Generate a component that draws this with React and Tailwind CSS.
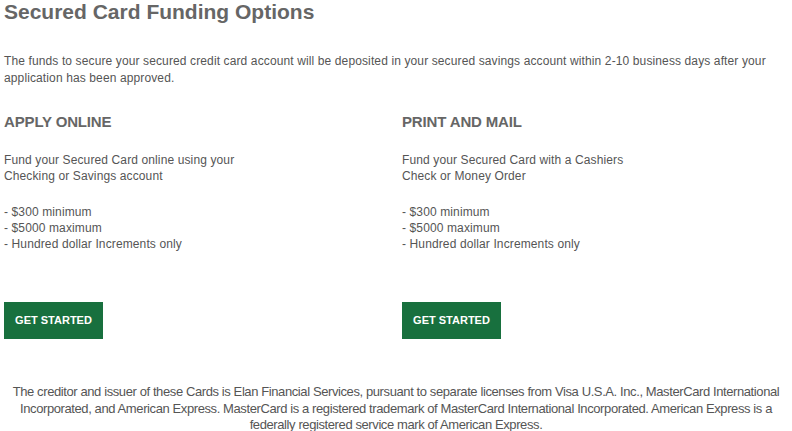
const options = [
  {
    title: "APPLY ONLINE",
    lines: ["Fund your Secured Card online using your", "Checking or Savings account"],
  },
  {
    title: "PRINT AND MAIL",
    lines: ["Fund your Secured Card with a Cashiers", "Check or Money Order"],
  },
];

const limits = ["- $300 minimum", "- $5000 maximum", "- Hundred dollar Increments only"];

function OptionColumn({ option }) {
  return (
    <div className="pl-[4px]">
      <h2 className="text-[15px] font-bold leading-[18px] text-[#666] tracking-[-0.15px]">{option.title}</h2>
      <p className="mt-[21px] text-[12px] leading-[16px] tracking-[0.12px] text-[#555]">
        {option.lines[0]}
        <br />
        {option.lines[1]}
      </p>
      <div className="mt-[20px] text-[12px] leading-[16px] tracking-[0.12px] text-[#555]">
        {limits.map((item) => (
          <div key={item}>{item}</div>
        ))}
      </div>
      <button className="mt-[50px] h-[37px] w-[99px] bg-[#18703e] text-[11px] font-bold text-white">
        GET STARTED
      </button>
    </div>
  );
}

export default function App() {
  return (
    <div className="bg-white w-[792px] h-[431px] overflow-hidden font-['Liberation_Sans',Arial,sans-serif]">
      <h1 className="pl-[4px] text-[21px] font-bold leading-[24px] text-[#666]">Secured Card Funding Options</h1>

      <p className="mt-[29px] px-[4px] text-[12px] leading-[17px] tracking-[0.12px] text-[#555]">
        The funds to secure your secured credit card account will be deposited in your secured savings account within
        2-10 business days after your application has been approved.
      </p>

      {/* Funding methods */}
      <div className="mt-[26px] grid grid-cols-[398px_1fr]">
        {options.map((option) => (
          <OptionColumn key={option.title} option={option} />
        ))}
      </div>

      <p className="mt-[45px] px-[4px] text-center text-[13px] leading-[16.5px] tracking-[-0.4px] text-[#555]">
        The creditor and issuer of these Cards is Elan Financial Services, pursuant to separate licenses from Visa U.S.A.
        Inc., MasterCard International Incorporated, and American Express. MasterCard is a registered trademark of
        MasterCard International Incorporated. American Express is a federally registered service mark of American
        Express.
      </p>
    </div>
  );
}
